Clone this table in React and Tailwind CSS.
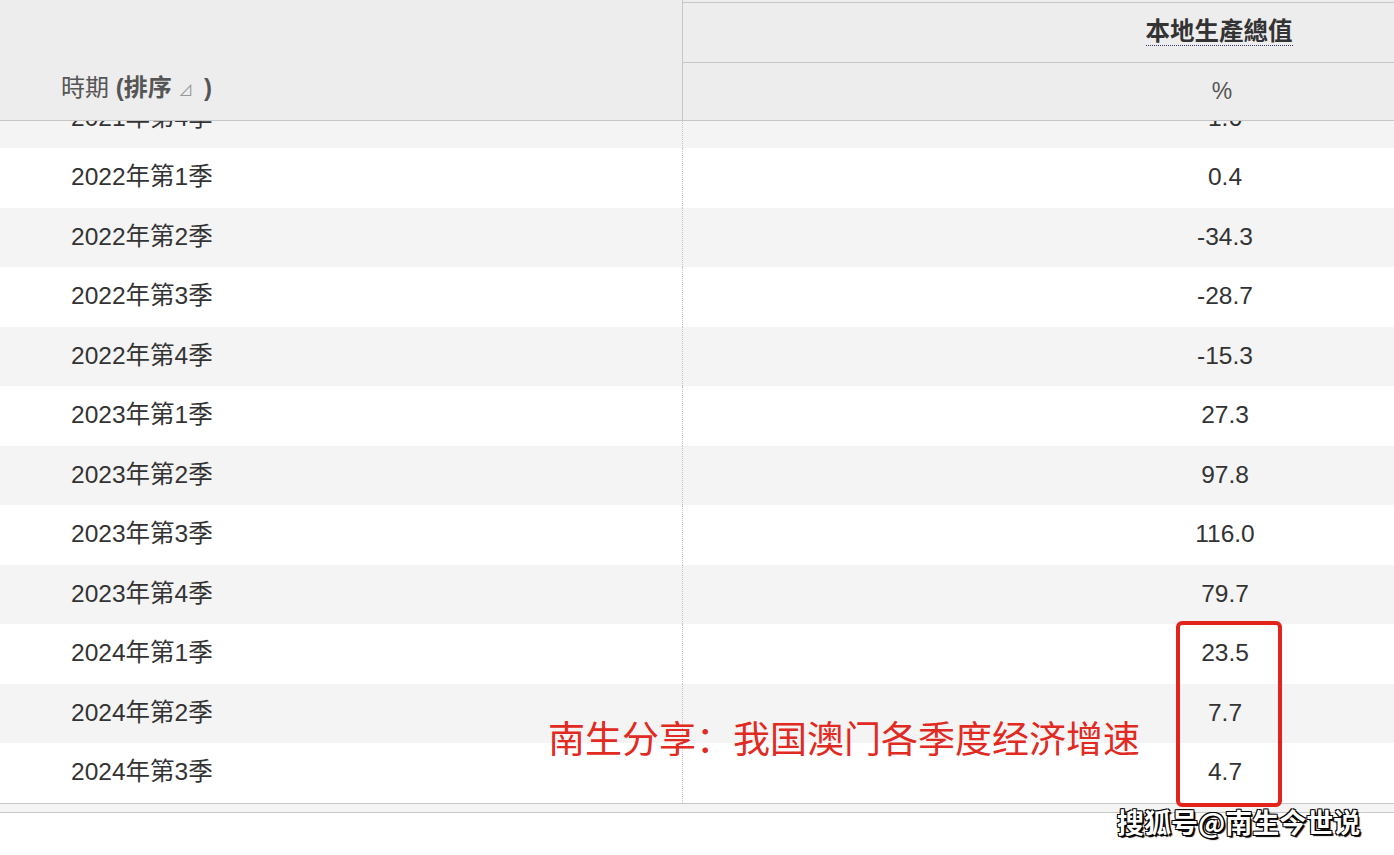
import React from "react";

const rows = [
  { period: "2022年第1季", value: "0.4" },
  { period: "2022年第2季", value: "-34.3" },
  { period: "2022年第3季", value: "-28.7" },
  { period: "2022年第4季", value: "-15.3" },
  { period: "2023年第1季", value: "27.3" },
  { period: "2023年第2季", value: "97.8" },
  { period: "2023年第3季", value: "116.0" },
  { period: "2023年第4季", value: "79.7" },
  { period: "2024年第1季", value: "23.5" },
  { period: "2024年第2季", value: "7.7" },
  { period: "2024年第3季", value: "4.7" },
];

const Row = ({ period, value, shaded }) => (
  <div className={`flex h-[59.5px] ${shaded ? "bg-[#f4f4f4]" : "bg-white"}`}>
    <div className="w-[683px] shrink-0 flex items-center pl-[71px] border-r border-dotted border-[#c4c4c4]">
      {period}
    </div>
    <div className="flex-1 flex items-center">
      <div className="ml-[442px] w-[200px] text-center">{value}</div>
    </div>
  </div>
);

export default function App() {
  return (
    <div className="relative w-[1394px] h-[855px] overflow-hidden bg-white text-[24.5px] text-[#333] font-['Liberation_Sans','Noto_Sans_CJK_TC',sans-serif]">
      {/* Header */}
      <div className="flex h-[121px] bg-[#ededed] border-b border-[#c6c6c6]">
        <div className="w-[683px] shrink-0 border-r border-[#c6c6c6] flex items-end pb-[14px] pl-[61px] text-[24px] text-[#555]">
          <span>
            時期 <span className="font-bold">(排序</span>{" "}
            <span className="text-[15px] text-[#999]">⊿</span>{" "}
            <span className="font-bold ml-[4px]">)</span>
          </span>
        </div>
        <div className="flex-1 flex flex-col mt-[2px] border-t border-[#c6c6c6]">
          <div className="h-[60px] flex items-center border-b border-[#c6c6c6]">
            <div className="ml-[436px] w-[200px] text-center">
              <span className="font-bold text-[24.5px] text-[#333] border-b border-dotted border-[#336]">
                本地生產總值
              </span>
            </div>
          </div>
          <div className="flex-1 flex items-center">
            <div className="ml-[439px] w-[200px] text-center text-[23px] text-[#555]">%</div>
          </div>
        </div>
      </div>

      {/* Partially scrolled row */}
      <div className="h-[27px] overflow-hidden bg-[#f4f4f4]">
        <div className="-mt-[32.5px]">
          <Row period="2021年第4季" value="1.6" shaded />
        </div>
      </div>

      {rows.map((r, i) => (
        <Row key={r.period} period={r.period} value={r.value} shaded={i % 2 === 1} />
      ))}

      <div className="h-[10px] bg-[#f4f4f4] border-t border-b border-[#c6c6c6]" />

      {/* Annotations */}
      <div className="absolute left-[1176px] top-[621px] w-[106px] h-[186px] border-[4px] border-[#e3241d] rounded-[6px]" />
      <div className="absolute left-[548px] top-[719px] text-[37px] leading-none text-[#e02a22] font-['Noto_Sans_CJK_SC',sans-serif]">
        南生分享：我国澳门各季度经济增速
      </div>
      <div className="absolute left-[1117px] top-[808px] text-[27px] leading-none font-bold text-white font-['Noto_Sans_CJK_SC',sans-serif] [text-shadow:1px_1px_0_#000,-1px_-1px_0_#000,1px_-1px_0_#000,-1px_1px_0_#000,2px_2px_1px_#000]">
        搜狐号@南生今世说
      </div>
    </div>
  );
}
